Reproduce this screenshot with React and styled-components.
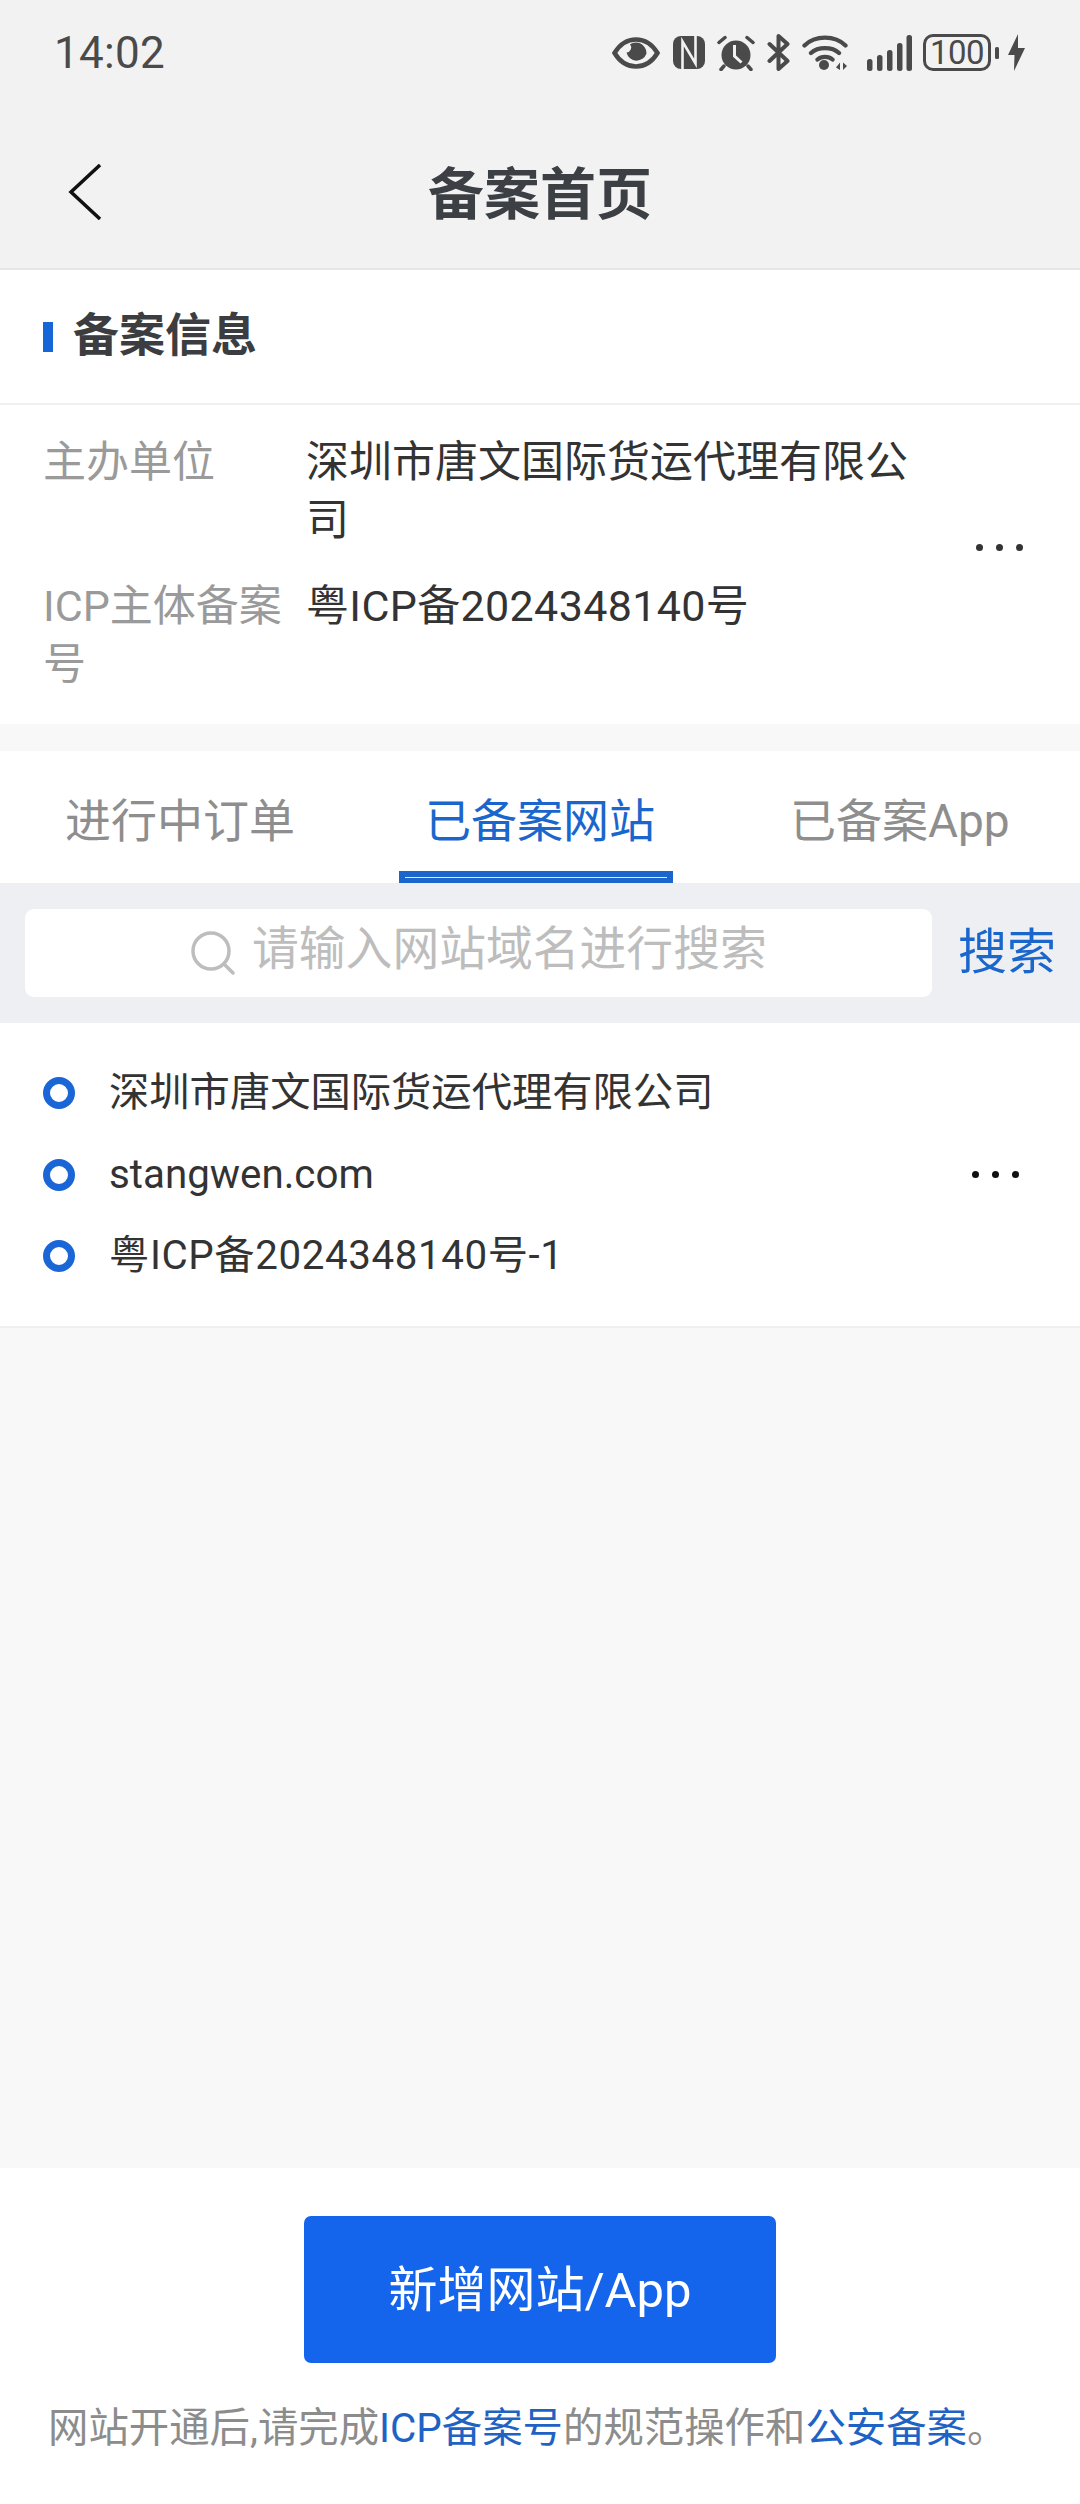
import React from "react";
import styled, { createGlobalStyle } from "styled-components";

const Global = createGlobalStyle`
  html, body { margin: 0; padding: 0; background: #f8f8f8; }
  * { box-sizing: border-box; }
  body { font-family: Roboto, "Noto Sans CJK SC", sans-serif; }
`;
const Page = styled.div`
  width: 1080px; height: 2504px; display: flex; flex-direction: column; overflow: hidden; background: #f8f8f8;
`;
const TopArea = styled.header`
  height: 270px; background: #f2f2f3; border-bottom: 2px solid #e6e6e7; display: flex; flex-direction: column;
`;
const StatusBar = styled.div`
  height: 105px; display: flex; align-items: center; justify-content: space-between; padding: 0 55px 0 54px; color: #4a4a4a;
`;
const Time = styled.div`
  font-size: 44px; line-height: 50px; font-family: Roboto, sans-serif; letter-spacing: 0.3px;
`;
const StatusIcons = styled.div`
  display: flex; align-items: center; height: 40px;
`;
const StatusIcon = styled.svg`
  display: block; flex: none; margin-left: ${p => p.$gap}px; fill: #4a4a4a;
`;
const Battery = styled.div`
  width: 68px; height: 37px; margin-left: 11px; border: 3.5px solid #4a4a4a; border-radius: 10px; display: flex; align-items: center; justify-content: center;
  font: 33px/30px Roboto, sans-serif; color: #4a4a4a; letter-spacing: -0.5px;
`;
const NavBar = styled.div`
  flex: 1; display: flex; align-items: center; justify-content: center; position: relative; padding-top: 6px;
`;
const BackIcon = styled.svg`
  position: absolute; left: 68px; top: 59px;
`;
const Title = styled.h1`
  margin: 0; font-size: 56px; line-height: 70px; font-weight: 700; color: #3c3f43; font-family: "Noto Sans CJK SC", sans-serif;
`;
const SectionHead = styled.div`
  height: 135px; background: #fff; border-bottom: 2px solid #f0f0f1; display: flex; align-items: center; padding-left: 43px; gap: 20px;
`;
const Marker = styled.div`
  width: 10px; height: 30px; background: #1766d8;
`;
const SectionTitle = styled.h2`
  margin: 0 0 12px; font-size: 46px; line-height: 60px; font-weight: 700; color: #3b3d40; font-family: "Noto Sans CJK SC", sans-serif;
`;
const InfoCard = styled.section`
  height: 319px; background: #fff; display: flex; align-items: flex-start; padding: 28px 32px 0 43px;
`;
const InfoRows = styled.div`
  width: 890px; display: flex; flex-direction: column; gap: 28px;
`;
const InfoRow = styled.div`
  display: grid; grid-template-columns: 263px 610px; font-size: 43px; line-height: 58px;
`;
const Label = styled.div`
  color: #9a9a9a; width: 245px;
`;
const Value = styled.div`
  color: #333; letter-spacing: ${p => p.$track || 0}px;
`;
const More = styled.div`
  display: flex; gap: 13px; margin-top: ${p => p.$top}px; margin-left: ${p => p.$left}px;
`;
const Dot = styled.span`
  width: 7px; height: 7px; border-radius: 50%; background: ${p => p.$color};
`;
const Tabs = styled.nav`
  margin-top: 27px; height: 132px; background: #fff; display: grid; grid-template-columns: 360px 365px 1fr; padding-left: 65px;
`;
const Tab = styled.div`
  position: relative; font-size: 46px; line-height: 60px; padding-top: 40px; color: ${p => (p.$active ? "#1a66cc" : "#8e8e8e")};
`;
const Underline = styled.div`
  position: absolute; left: -26px; bottom: 0; width: 274px; height: 12px; background: #1a66cc; display: flex; align-items: center; justify-content: center;
  &::after { content: ""; width: 262px; height: 1px; background: #dfe9f8; }
`;
const SearchBar = styled.div`
  height: 140px; background: #eeeff3; display: flex; align-items: center; padding: 0 25px; gap: 26px;
`;
const SearchInput = styled.div`
  flex: none; width: 907px; height: 88px; background: #fff; border-radius: 9px; display: flex; align-items: center; padding-left: 165px; gap: 16px;
  font-size: 46.8px; color: #bdbdbd;
`;
const Placeholder = styled.span`
  margin-bottom: 18px;
`;
const SearchAction = styled.div`
  flex: none; white-space: nowrap; font-size: 49px; line-height: 60px; color: #1a66cc;
`;
const ListCard = styled.section`
  height: 305px; background: #fff; border-bottom: 2px solid #efeff0; display: flex; align-items: center; padding: 0 0 0 43px;
`;
const ListItems = styled.div`
  width: 929px; display: flex; flex-direction: column; gap: 21.5px;
`;
const ListItem = styled.div`
  display: flex; align-items: center; gap: 34px; font-size: 40.3px; line-height: 60px; color: #333; letter-spacing: ${p => p.$track || 0}px;
`;
const Ring = styled.span`
  width: 32px; height: 32px; border-radius: 50%; border: 7px solid #1a66d6; flex: none;
`;
const Spacer = styled.div`
  flex: 1;
`;
const Footer = styled.footer`
  height: 336px; background: #fff; display: flex; flex-direction: column; align-items: center; padding-top: 48px;
`;
const PrimaryButton = styled.button`
  width: 472px; height: 147px; border: 0; border-radius: 7px; background: #1565ec; color: #fff; font: 49px/60px Roboto, "Noto Sans CJK SC", sans-serif; padding: 2px 0 0;
`;
const Note = styled.p`
  margin: 36px 0 0; align-self: flex-start; padding-left: 48px; font-size: 40.4px; line-height: 60px; color: #8c8c8c; white-space: nowrap;
`;
const Link = styled.span`
  color: #1e63c4;
`;

const Eye = () => (
  <StatusIcon $gap={0} width="48" height="32" viewBox="0 0 48 32">
    <path d="M2.500 16C8 7 15 2.500 24 2.500S40 7 45.500 16C40 25 33 29.500 24 29.500S8 25 2.500 16Z" fill="none" stroke="#4a4a4a" strokeWidth="4.500" />
    <path d="M24 5.500a11 11 0 0 0-6 1.800 5 5 0 0 1-3.500 8.200A10.500 11 0 0 0 34.500 16.500 10.500 11 0 0 0 24 5.500Z" />
  </StatusIcon>
);
const NfcIcon = () => (
  <StatusIcon $gap={13} width="32" height="33" viewBox="0 0 32 33">
    <rect width="32" height="33" rx="8" />
    <path d="M9.500 33V5.500L22.500 27.500V0" fill="none" stroke="#f2f2f3" strokeWidth="2.600" />
  </StatusIcon>
);
const Alarm = () => (
  <StatusIcon $gap={12} width="38" height="36" viewBox="0 0 38 36">
    <circle cx="19" cy="20" r="14.500" />
    <path d="M17.500 10V21l7 6.500" fill="none" stroke="#f2f2f3" strokeWidth="3" />
    <path d="M2 7.500 8 2.500M30 2.500 36 7.500M7 31 4 34.500M31 31 34 34.500" fill="none" stroke="#4a4a4a" strokeWidth="3.500" strokeLinecap="round" />
  </StatusIcon>
);
const Bluetooth = () => (
  <StatusIcon $gap={12} width="23" height="37" viewBox="0 0 23 37">
    <path d="M2.500 10 20.500 27 11.500 35V2L20.500 10 2.500 27" fill="none" stroke="#4a4a4a" strokeWidth="4" strokeLinejoin="round" strokeLinecap="round" />
  </StatusIcon>
);
const Wifi = () => (
  <StatusIcon $gap={12} width="46" height="37" viewBox="0 0 46 37">
    <path d="M2.500 11.500C13 1 33 1 43.500 11.500M9 19C16 12.500 30 12.500 37 19M15.500 25.500C19.500 22 26.500 22 30.500 25.500" fill="none" stroke="#4a4a4a" strokeWidth="4.300" strokeLinecap="round" />
    <circle cx="22" cy="31" r="5" />
    <path d="M34 33.500l4-5v7.500zM41 28.500l4 3.500-4 4z" />
  </StatusIcon>
);
const Signal = () => (
  <StatusIcon $gap={19} width="45" height="36" viewBox="0 0 45 36">
    <rect x="0" y="24" width="5.500" height="12" rx="2.500" />
    <rect x="10" y="20" width="5.500" height="16" rx="2.500" />
    <rect x="20" y="15" width="5.500" height="21" rx="2.500" />
    <rect x="30" y="8" width="5.500" height="28" rx="2.500" />
    <rect x="39.500" y="0" width="5.500" height="36" rx="2.500" />
  </StatusIcon>
);
const BatteryNub = () => (
  <StatusIcon $gap={4} width="4" height="12" viewBox="0 0 4 12">
    <rect width="4" height="12" rx="1.500" />
  </StatusIcon>
);
const Bolt = () => (
  <StatusIcon $gap={9} width="17" height="37" viewBox="0 0 17 37">
    <path d="M10 0 0 21h6.500L6 37 17 14h-7z" />
  </StatusIcon>
);
const SearchGlyph = () => (
  <svg width="46" height="46" viewBox="0 0 46 46" fill="none" stroke="#bdbdbd" strokeWidth="3.500" strokeLinecap="round">
    <circle cx="21" cy="21" r="18" />
    <path d="M34 34l9 9" />
  </svg>
);
const MoreDots = ({ color, top, left }) => (
  <More $top={top} $left={left}>
    <Dot $color={color} /><Dot $color={color} /><Dot $color={color} />
  </More>
);

export default function App() {
  return (
    <Page>
      <Global />
      <TopArea>
        <StatusBar>
          <Time>14:02</Time>
          <StatusIcons>
            <Eye /><NfcIcon /><Alarm /><Bluetooth /><Wifi /><Signal />
            <Battery>100</Battery>
            <BatteryNub /><Bolt />
          </StatusIcons>
        </StatusBar>
        <NavBar>
          <BackIcon width="34" height="56" viewBox="0 0 34 56" fill="none" stroke="#111" strokeWidth="3.500">
            <path d="M32 1 3 28 32 55" />
          </BackIcon>
          <Title>备案首页</Title>
        </NavBar>
      </TopArea>
      <SectionHead>
        <Marker />
        <SectionTitle>备案信息</SectionTitle>
      </SectionHead>
      <InfoCard>
        <InfoRows>
          <InfoRow>
            <Label>主办单位</Label>
            <Value>深圳市唐文国际货运代理有限公司</Value>
          </InfoRow>
          <InfoRow>
            <Label>ICP主体备案号</Label>
            <Value $track={0.35}>粤ICP备2024348140号</Value>
          </InfoRow>
        </InfoRows>
        <MoreDots color="#333" top={111} left={43} />
      </InfoCard>
      <Tabs>
        <Tab>进行中订单</Tab>
        <Tab $active>已备案网站<Underline /></Tab>
        <Tab>已备案App</Tab>
      </Tabs>
      <SearchBar>
        <SearchInput>
          <SearchGlyph />
          <Placeholder>请输入网站域名进行搜索</Placeholder>
        </SearchInput>
        <SearchAction>搜索</SearchAction>
      </SearchBar>
      <ListCard>
        <ListItems>
          <ListItem><Ring />深圳市唐文国际货运代理有限公司</ListItem>
          <ListItem><Ring />stangwen.com</ListItem>
          <ListItem $track={0.6}><Ring />粤ICP备2024348140号-1</ListItem>
        </ListItems>
        <MoreDots color="#111" />
      </ListCard>
      <Spacer />
      <Footer>
        <PrimaryButton>新增网站/App</PrimaryButton>
        <Note>网站开通后,请完成<Link>ICP备案号</Link>的规范操作和<Link>公安备案</Link>。</Note>
      </Footer>
    </Page>
  );
}
